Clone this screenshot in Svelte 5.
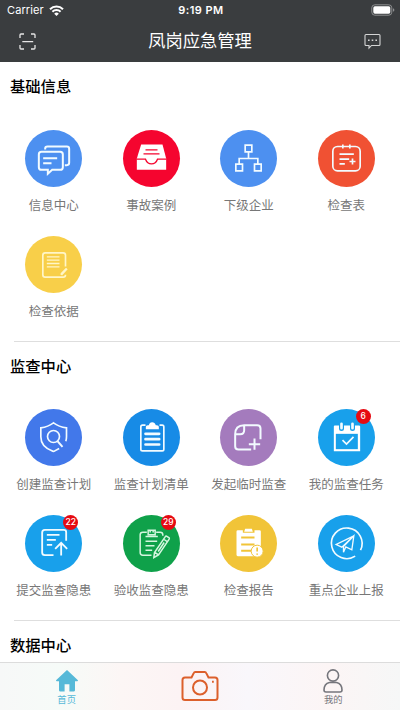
<script>
    // icon coordinates are centred on the circle, 3 units per pixel
    const sections = [
        {
            title: '基础信息',
            items: [
                { name: '信息中心', icon: 'chat', color: '#4d90f0' },
                { name: '事故案例', icon: 'tray', color: '#f5052f' },
                { name: '下级企业', icon: 'tree', color: '#4d90f0' },
                { name: '检查表', icon: 'table', color: '#f05133' },
                { name: '检查依据', icon: 'note', color: '#f8cf49' }
            ]
        },
        {
            title: '监查中心',
            items: [
                { name: '创建监查计划', icon: 'shield', color: '#4278ea' },
                { name: '监查计划清单', icon: 'clipboard', color: '#178be6' },
                { name: '发起临时监查', icon: 'newPage', color: '#a47bbd' },
                { name: '我的监查任务', icon: 'calendar', color: '#18a0eb', badge: 6 },
                { name: '提交监查隐患', icon: 'submit', color: '#18a0eb', badge: 22 },
                { name: '验收监查隐患', icon: 'accept', color: '#0fa14a', badge: 29 },
                { name: '检查报告', icon: 'report', color: '#f1c438' },
                { name: '重点企业上报', icon: 'plane', color: '#18a0eb' }
            ]
        },
        { title: '数据中心', items: [] }
    ];
</script>

<div class="page">
    <header>
        <div class="status">
            <div class="carrier">
                <span>Carrier</span>
                <svg width="15" height="11" viewBox="0 0 15 11" fill="none" stroke="#fff" stroke-width="2">
                    <path d="M1 4.2a9.2 9.2 0 0 1 13 0M3.4 6.8a5.8 5.8 0 0 1 8.2 0" />
                    <path d="M7.5 11 5.2 8.7a3.3 3.3 0 0 1 4.6 0z" fill="#fff" stroke="none" />
                </svg>
            </div>
            <div class="time">9:19 PM</div>
            <div class="power">
                <svg width="24" height="12" viewBox="0 0 24 12">
                    <rect x=".8" y=".8" width="20" height="10.4" rx="3" fill="none" stroke="#8d8f90" />
                    <rect x="2.3" y="2.3" width="17" height="7.4" rx="1.6" fill="#fff" />
                    <path d="M22 4.2q1.4.5 1.4 1.8T22 7.8z" fill="#8d8f90" />
                </svg>
            </div>
        </div>
        <div class="nav">
            <svg width="17" height="17" viewBox="0 0 17 17" fill="none" stroke="#e6e6e6" stroke-width="1.3">
                <path d="M1 5V2q0-1 1-1h3M12 1h3q1 0 1 1v3M16 12v3q0 1-1 1h-3M5 16H2q-1 0-1-1v-3M3.3 8.7h10.9" />
            </svg>
            <h1>凤岗应急管理</h1>
            <svg width="17" height="17" viewBox="0 0 17 17" fill="none" stroke="#d4d5d5" stroke-width="1.1">
                <path d="M2 1.500h13q1 0 1 1v9q0 1-1 1H7.500L5 15.200v-2.700H2q-1 0-1-1v-9q0-1 1-1z" />
                <path d="M4 7.300h1.600M7.700 7.300h1.600M11.400 7.300H13" stroke-width="1.5" />
            </svg>
        </div>
    </header>

    <main>
        {#each sections as section}
            <section>
                <h2>{section.title}</h2>
                {#if section.items.length}
                    <div class="grid">
                        {#each section.items as item}
                            <div class="item">
                                <div class="circle" style="background: {item.color}; color: {item.color}">
                                    <svg class="icon" viewBox="-85.5 -85.5 171 171">
                                        {#if item.icon === 'chat'}
                                            <g stroke-width="6">
                                                <path d="M-25-27v-2q0-7 7-7h58q7 0 7 7v42q0 7-7 7h-6" />
                                                <path d="M-36-20h56q8 0 8 8v38q0 8-8 8H-4l-13 12V34h-19q-8 0-8-8v-38q0-8 8-8z" />
                                                <path d="M-31-1h42M-31 14h25" />
                                            </g>
                                        {:else if item.icon === 'tray'}
                                            <path class="solid" d="M-31-42h64L44 0v34h-88V0z" />
                                            <path class="cut" d="M-45 2h27Q-13 16 0 16T18 2h27M-18-26h36M-24-14h48" stroke-width="4" />
                                        {:else if item.icon === 'tree'}
                                            <path d="M-10-40h20v20h-20zM-38 17h20v20h-20zM18 17h20v20H18zM0-20V0M-28 17V0h56v17" />
                                        {:else if item.icon === 'table'}
                                            <rect x="-41" y="-36" width="82" height="73" rx="14" />
                                            <path d="M-11-42v12M10-42v12M-21-13h43M-21 2H8M-21 16h16M18 0v18M9 9h18" />
                                        {:else if item.icon === 'note'}
                                            <g stroke="#fff6c8" stroke-width="5">
                                                <path d="M36 6v-34q0-7-7-7h-54q-7 0-7 7v59q0 7 7 7h54q7 0 7-7" />
                                                <path d="M-20-23h38M-20-13h38M-20-3h38M-20 7h38" stroke-width="4" />
                                                <path d="m40 12-15 16-2 3" stroke-width="7" />
                                            </g>
                                        {:else if item.icon === 'shield'}
                                            <path d="M37 11q2-6 2-13v-27Q16-32 0-44q-16 12-38 15v27Q-38 27-5 40q5 3 9 0l13-7" />
                                            <circle cx="0" cy="-3" r="18" />
                                            <path d="m12 11 15 17" stroke-width="6" />
                                        {:else if item.icon === 'clipboard'}
                                            <path d="M-18-37h-9q-5 0-5 5v67q0 5 5 5h59q5 0 5-5v-67q0-5-5-5h-8" />
                                            <path class="solid" d="M-17-25v-7q0-5 6-5h3q2-9 10-9t11 9h3q6 0 6 5v7z" />
                                            <path d="M-18-11h41M-18 5h41M-18 21h41" stroke-width="8" stroke-linecap="round" />
                                        {:else if item.icon === 'newPage'}
                                            <path d="M8 36h-38q-10 0-10-10v-36q0-27 27-27h39q10 0 10 10V5M-13-37v15q0 12-12 12h-15M18 3v34M1 20h34" stroke-width="6" />
                                        {:else if item.icon === 'calendar'}
                                            <path class="solid" d="M-35-36h72q4 0 4 4v73h-79v-73q0-4 3-4z" />
                                            <path class="hole" d="M-32-11h66v46h-66z" />
                                            <path class="cut" d="M-15-42v15M18-42v15" stroke-width="15" stroke-linecap="round" />
                                            <path d="M-15-41v13M18-41v13" stroke-width="8" stroke-linecap="round" />
                                            <path d="M-12 8 0 20 21-2" />
                                        {:else if item.icon === 'submit'}
                                            <path d="M0 35h-26q-8 0-8-8v-60q0-8 8-8h57q7 0 7 7v26M-20-26h38M-20-11H7M-20 4h16M23 36V0M5 16 23-2l18 18" stroke-width="5.5" />
                                        {:else if item.icon === 'accept'}
                                            <g stroke="#d5f6df" stroke-width="4.5">
                                                <path d="M-14-34h-12q-8 0-8 8v53q0 8 8 8H0M14-34h12q8 0 8 8v3M-10-40h21v14h-21zM-18-21H19M-18-7H17M-18 7H9M-18 20H2M-4-38v5M5-38v5" />
                                                <path d="m45-22 8 5q1 2 0 4L21 34 7 42l2-15L41-20q2-3 4-2zM38-12l10 7M10 27l11 7M38-3 20 24" />
                                            </g>
                                        {:else if item.icon === 'report'}
                                            <path class="solid" d="M-32-40h15v8h35v-8h15q4 0 4 4v74h-69q-4 0-4-4v-70q0-4 4-4z" />
                                            <path class="solid" d="M-10-44H10l3 9h-26z" />
                                            <path class="cut" d="M-22-18h40M-22 3h40M-22 22H8" stroke-width="6" />
                                            <circle class="solid edge" cx="26" cy="23" r="18" stroke-width="3" />
                                            <path class="cut" d="M26 12v12M26 30v4" stroke-width="5" />
                                        {:else}
                                            <path d="M26 38A46 46 0 1 1 42 20" />
                                            <path d="m22-23-53 26 17 8 36-34-6 42-18-9-7 16V9l31-32" stroke-width="4" />
                                        {/if}
                                    </svg>
                                    {#if item.badge}
                                        <span class="badge">{item.badge}</span>
                                    {/if}
                                </div>
                                <span class="name">{item.name}</span>
                            </div>
                        {/each}
                    </div>
                {/if}
            </section>
        {/each}
    </main>

    <footer>
        <div class="tab active">
            <svg width="22" height="22" viewBox="0 0 22 22" fill="#56b9d8">
                <path d="M11 0 .3 10q-.7 1 .5 1.200H3v9q0 1.400 1.400 1.400h4.200v-7.400h4.800v7.400h4.200q1.400 0 1.400-1.400v-9h2.200q1.200-.2.500-1.200z" />
            </svg>
            <span>首页</span>
        </div>
        <div class="tab camera">
            <svg width="38" height="30" viewBox="0 0 38 30" fill="none" stroke="#dc602c" stroke-width="2">
                <path d="M4 6.500h6.500l2.200-4.400q.5-1.100 1.500-1.100h9.600q1 0 1.500 1.100l2.200 4.400H34q2.500 0 2.500 2.500v17.500q0 2.500-2.500 2.500H4q-2.500 0-2.500-2.500V9Q1.500 6.500 4 6.500z" />
                <circle cx="19" cy="16.500" r="7" />
                <path d="M31 10.700h1.800" />
            </svg>
        </div>
        <div class="tab mine">
            <svg width="20" height="24" viewBox="0 0 20 24" fill="none" stroke="#75767c" stroke-width="1.600">
                <circle cx="10" cy="6.500" r="5.600" />
                <path d="M6.500 13.500h7q5.500 1.300 5.500 7.500 0 2-2 2H3q-2 0-2-2 0-6.200 5.500-7.500z" />
            </svg>
            <span>我的</span>
        </div>
    </footer>
</div>

<style>
    :global(body) {
        background: #fff;
    }
    .page {
        width: 400px;
        height: 710px;
        display: flex;
        flex-direction: column;
        overflow: hidden;
        font-family: Inter, "Noto Sans CJK SC", sans-serif;
    }
    header {
        height: 62px;
        flex: none;
        background: #3a3d3f;
        color: #fff;
    }
    .status {
        height: 20px;
        display: grid;
        grid-template-columns: 1fr auto 1fr;
        align-items: center;
        padding: 0 5px 0 7px;
        font-size: 11px;
        line-height: 20px;
    }
    .carrier {
        display: flex;
        align-items: center;
        gap: 5px;
        letter-spacing: 0.1px;
    }
    .time {
        font-weight: 600;
        letter-spacing: 0.45px;
    }
    .power {
        display: flex;
        justify-content: flex-end;
    }
    .nav {
        height: 42px;
        display: flex;
        align-items: center;
        justify-content: space-between;
        padding: 0 19px;
    }
    h1 {
        margin: 0;
        font-size: 17.3px;
        font-weight: 400;
        line-height: 42px;
    }
    main {
        flex: 1;
        min-height: 0;
        overflow: hidden;
    }
    section {
        padding-top: 11px;
    }
    section:not(:last-child) {
        border-bottom: 1px solid;
        border-image: linear-gradient(to right, transparent 15px, #dedede 15px) 1;
    }
    h2 {
        margin: 0 0 0 10px;
        font-size: 15.3px;
        font-weight: 500;
        line-height: 28px;
        color: #000;
    }
    .grid {
        display: grid;
        grid-template-columns: repeat(4, 97.5px);
        padding: 28.5px 0 0 5px;
        margin-bottom: -1px;
    }
    .item {
        height: 106px;
        display: flex;
        flex-direction: column;
        align-items: center;
    }
    .circle {
        position: relative;
        width: 57px;
        height: 57px;
        border-radius: 50%;
    }
    .icon {
        display: block;
        width: 57px;
        height: 57px;
        fill: none;
        stroke: #f2fbff;
        stroke-width: 5;
    }
    .solid {
        fill: #fff;
        stroke: none;
    }
    .cut,
    .edge {
        stroke: currentColor;
    }
    .hole {
        fill: currentColor;
        stroke: none;
    }
    .badge {
        position: absolute;
        top: 0;
        right: 4px;
        width: 15px;
        height: 15px;
        border-radius: 50%;
        background: #e60a12;
        color: #fff;
        font-size: 8.5px;
        font-weight: 500;
        line-height: 15px;
        text-align: center;
    }
    .name {
        margin-top: 9px;
        font-size: 12.5px;
        line-height: 20px;
        color: #777;
        white-space: nowrap;
    }
    footer {
        height: 48px;
        flex: none;
        box-sizing: border-box;
        display: grid;
        grid-template-columns: repeat(3, 133.3px);
        border-top: 1px solid #dcdcdc;
        background: linear-gradient(to right, #f7f8f8, #f6fbf8 15%, #fcf6f5 30%, #fcf3f4 45%, #f9f7fb 62%, #fcf5f5 82%, #f6f7f7);
    }
    .tab {
        display: flex;
        flex-direction: column;
        align-items: center;
        padding-top: 7px;
        font-size: 9.3px;
        line-height: 16px;
        color: #75767c;
    }
    .camera {
        padding-top: 8px;
    }
    .mine {
        padding-top: 6px;
        line-height: 14px;
    }
    .active {
        color: #56b9d8;
    }
</style>
